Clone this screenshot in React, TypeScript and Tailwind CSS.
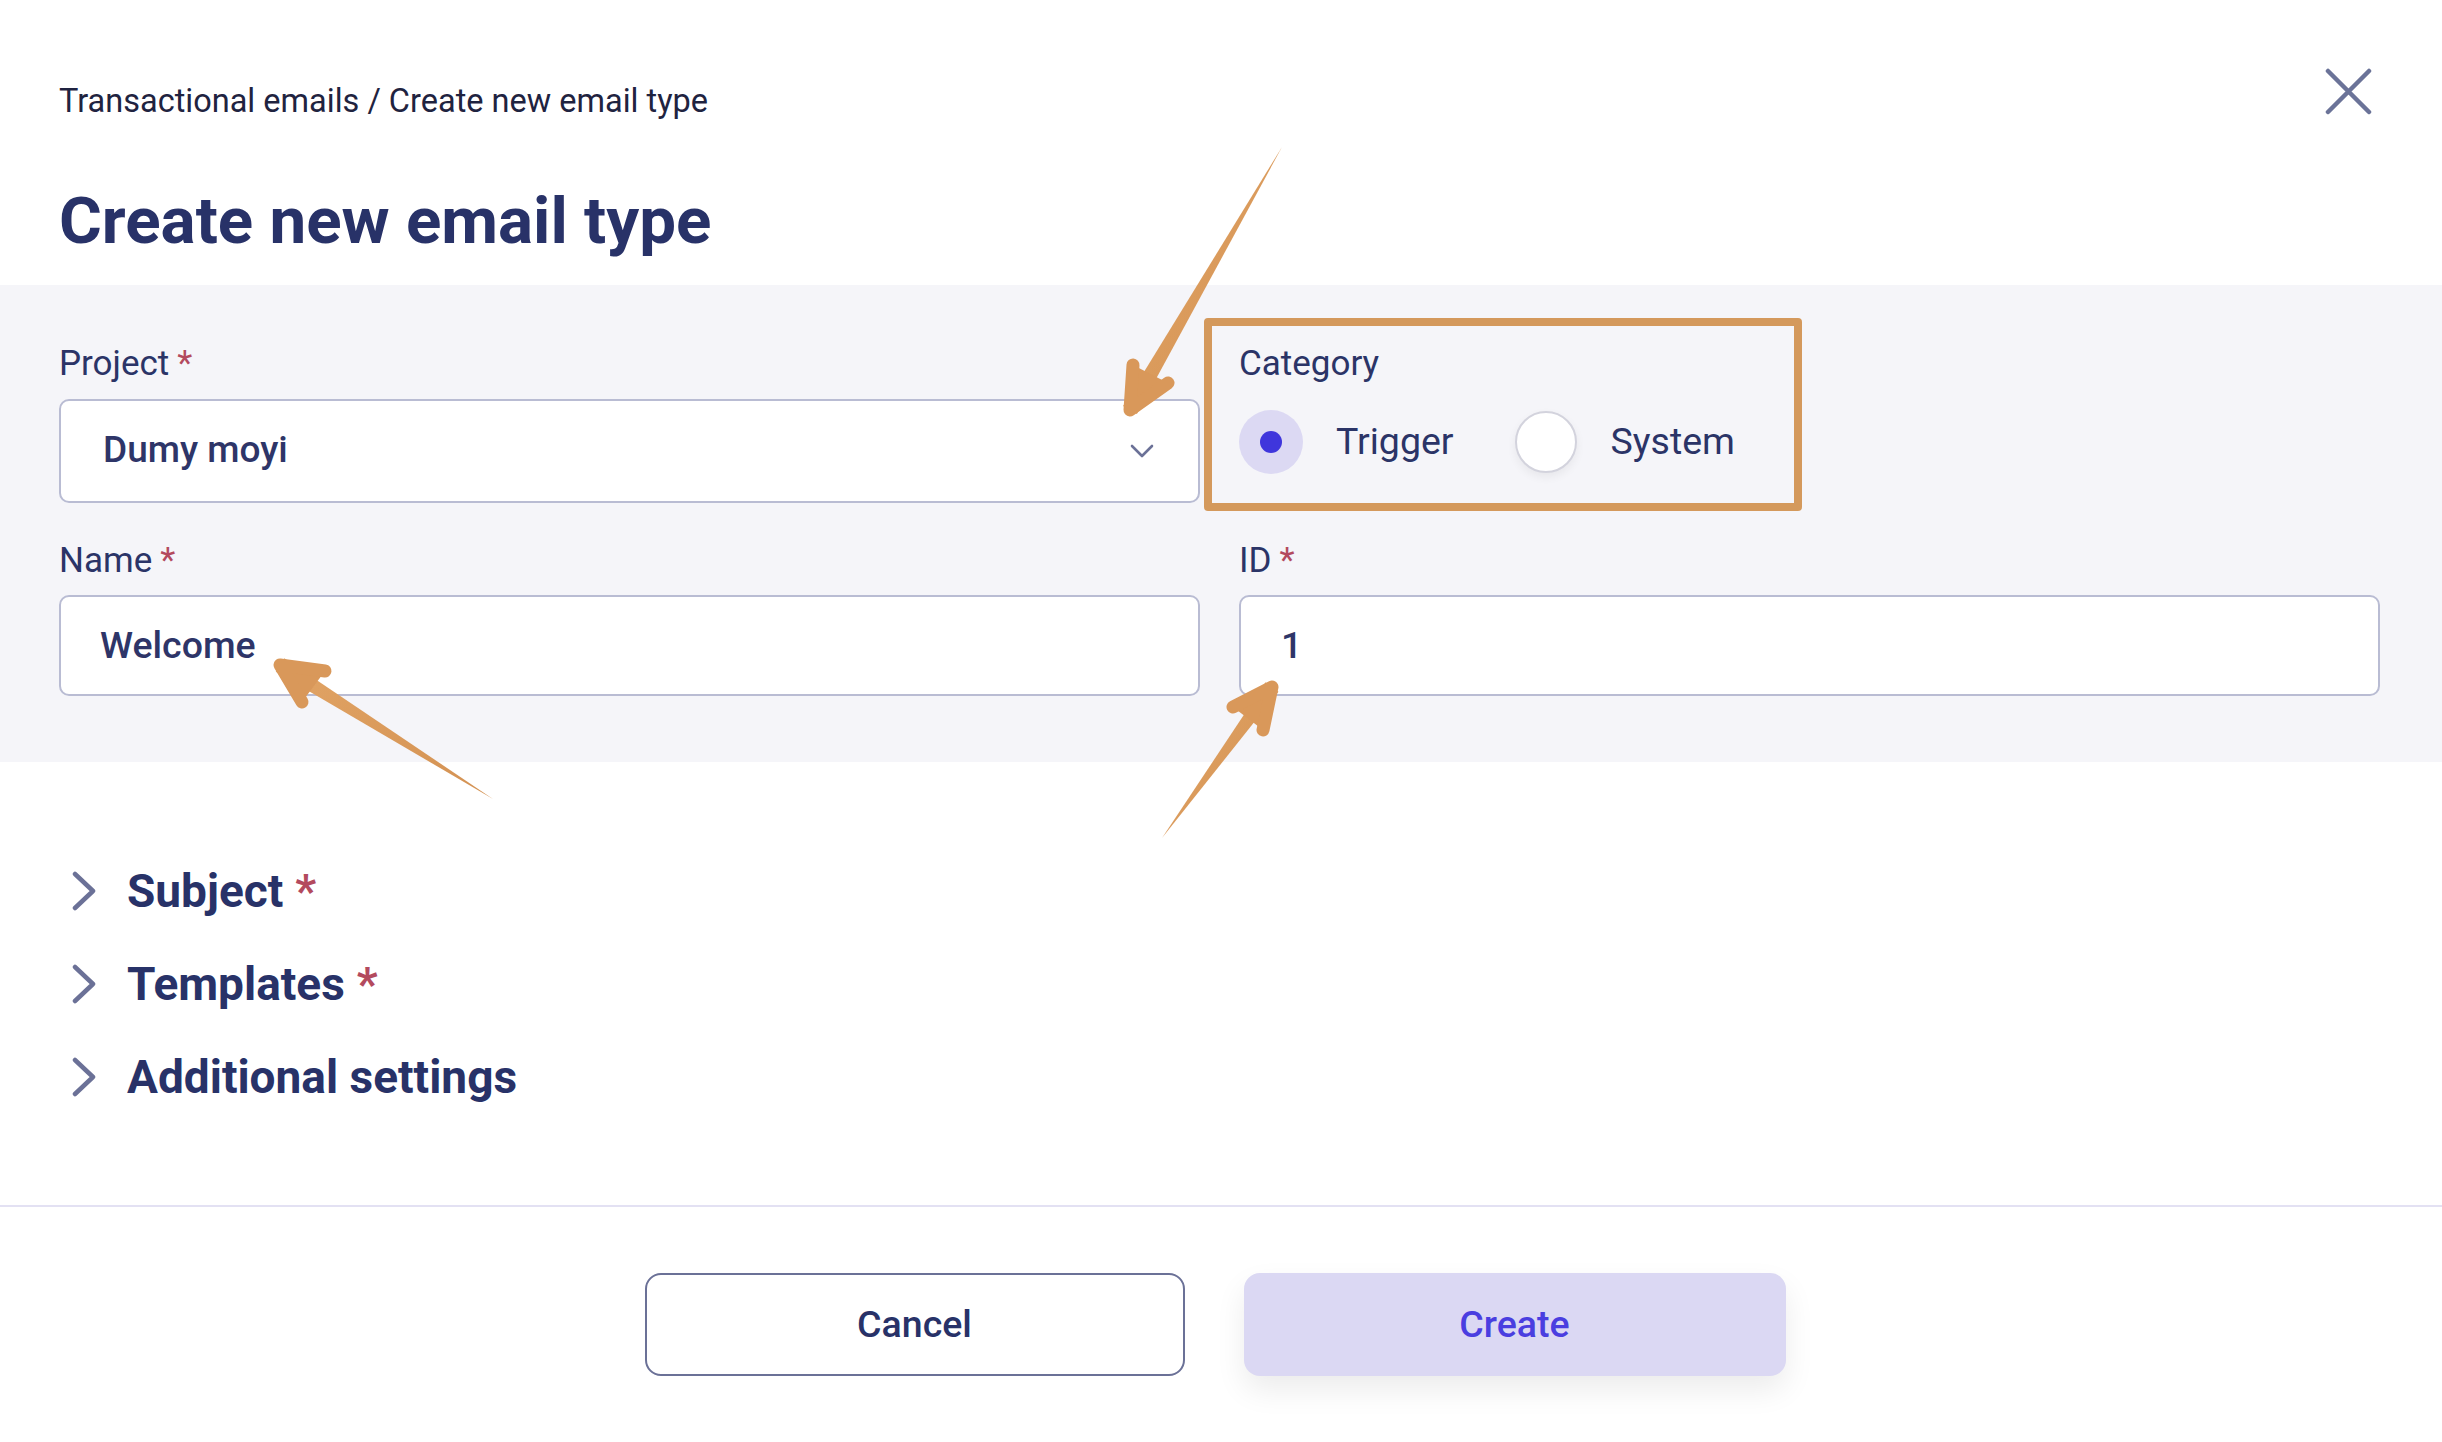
import React from "react";

type Pt = [number, number];

function Arrow({ tail, tip, barbs }: { tail: Pt; tip: Pt; barbs: [Pt, Pt] }) {
    const dx = tip[0] - tail[0];
    const dy = tip[1] - tail[1];
    const len = Math.hypot(dx, dy);
    const px = (-dy / len) * 8;
    const py = (dx / len) * 8;
    const shaft = `${tail[0]},${tail[1]} ${tip[0] + px},${tip[1] + py} ${tip[0] - px},${tip[1] - py}`;
    return (
        <g>
            <polygon points={shaft} fill="url(#arrowGrad)" />
            <polygon points={`${barbs[0][0]},${barbs[0][1]} ${tip[0]},${tip[1]} ${barbs[1][0]},${barbs[1][1]}`} fill="#d9985a" />
            <polyline
                points={`${barbs[0][0]},${barbs[0][1]} ${tip[0]},${tip[1]} ${barbs[1][0]},${barbs[1][1]}`}
                fill="none"
                stroke="#d9985a"
                strokeWidth={13}
                strokeLinecap="round"
                strokeLinejoin="round"
            />
        </g>
    );
}

function Label({ text, required }: { text: string; required?: boolean }) {
    return (
        <div className="text-[35px] leading-[42px] text-[#2b3467]">
            {text}
            {required && <span className="ml-[8px] text-[#b34a5e]">*</span>}
        </div>
    );
}

function Chevron() {
    return (
        <svg width="40" height="40" viewBox="0 0 40 40" className="shrink-0">
            <path d="M16 3 L34 20 L16 37" fill="none" stroke="#6b7197" strokeWidth="4.5" strokeLinecap="round" strokeLinejoin="round" />
        </svg>
    );
}

function Section({ title, required }: { title: string; required?: boolean }) {
    return (
        <div className="flex items-center gap-[28px] h-[56px]">
            <Chevron />
            <span className="text-[46px] font-bold text-[#283268] leading-[56px]">
                {title}
                {required && <span className="ml-[12px] text-[#b34a5e]">*</span>}
            </span>
        </div>
    );
}

export default function App() {
    return (
        <div className="relative w-full min-h-[1442px] bg-white overflow-hidden font-['Roboto',sans-serif]">
            {/* header */}
            <div className="flex justify-between items-start pl-[59px] pr-[70px] pt-[81px]">
                <div className="text-[32.5px] leading-[40px] text-[#1f2340]">Transactional emails / Create new email type</div>
                <button className="-mt-[13px] w-[47px] h-[47px]">
                    <svg width="47" height="47" viewBox="0 0 47 47">
                        <path d="M3 3 L44 44 M44 3 L3 44" stroke="#6b7398" strokeWidth="4.5" strokeLinecap="round" />
                    </svg>
                </button>
            </div>
            <h1 className="px-[59px] mt-[62px] text-[65.5px] leading-[76px] font-bold text-[#283268]">Create new email type</h1>

            {/* fields */}
            <div className="mt-[26px] bg-[#f5f5f9] pl-[59px] pr-[62px] pt-[58px] pb-[66px] grid grid-cols-2 gap-x-[39px]">
                <div className="flex flex-col gap-[14px]">
                    <Label text="Project" required />
                    <div className="h-[104px] bg-white border-2 border-[#b9bcd3] rounded-[10px] flex items-center justify-between pl-[42px] pr-[44px]">
                        <span className="text-[37px] font-medium text-[#2e3568] -mt-[2px]">Dumy moyi</span>
                        <svg width="24" height="14" viewBox="0 0 24 14">
                            <path d="M2 2 L12 12 L22 2" fill="none" stroke="#6b7197" strokeWidth="2.6" strokeLinecap="round" strokeLinejoin="round" />
                        </svg>
                    </div>
                </div>
                <div className="flex flex-col gap-[14px]">
                    <Label text="Category" />
                    <div className="h-[104px] flex items-center">
                        <div className="w-[64px] h-[64px] rounded-full bg-[#dcd9f3] flex items-center justify-center -mt-[18px]">
                            <div className="w-[22px] h-[22px] rounded-full bg-[#3f36dc]" />
                        </div>
                        <span className="ml-[33px] text-[37.5px] text-[#2b3467] -mt-[20px]">Trigger</span>
                        <div className="ml-[61px] w-[62px] h-[62px] rounded-full bg-white border-2 border-[#d3d3dd] shadow-[0_4px_10px_rgba(0,0,0,0.06)] -mt-[18px]" />
                        <span className="ml-[34px] text-[37.5px] text-[#2b3467] -mt-[20px]">System</span>
                    </div>
                </div>
                <div className="flex flex-col gap-[13px] mt-[37px]">
                    <Label text="Name" required />
                    <div className="h-[101px] bg-white border-2 border-[#b9bcd3] rounded-[10px] flex items-center pl-[39px]">
                        <span className="text-[37.5px] font-medium text-[#2e3568]">Welcome</span>
                    </div>
                </div>
                <div className="flex flex-col gap-[13px] mt-[37px]">
                    <Label text="ID" required />
                    <div className="h-[101px] bg-white border-2 border-[#b9bcd3] rounded-[10px] flex items-center pl-[40px]">
                        <span className="text-[37.5px] font-medium text-[#2e3568]">1</span>
                    </div>
                </div>
            </div>

            {/* sections */}
            <div className="pl-[59px] pt-[101px] pb-[100px] flex flex-col gap-[37px]">
                <Section title="Subject" required />
                <Section title="Templates" required />
                <Section title="Additional settings" />
            </div>

            {/* footer */}
            <div className="border-t-2 border-[#e3e1f3] pt-[66px] pb-[60px] pr-[12px] flex justify-center gap-[59px]">
                <button className="w-[540px] h-[103px] rounded-[16px] border-2 border-[#6b7197] bg-white text-[37.5px] font-medium text-[#283268]">
                    Cancel
                </button>
                <button className="w-[542px] h-[103px] rounded-[16px] bg-[#dbd8f3] text-[37.5px] font-medium text-[#4a3ee0] shadow-[0_14px_30px_rgba(0,0,0,0.08)]">
                    Create
                </button>
            </div>

            {/* annotation box */}
            <div className="absolute left-[1204px] top-[318px] w-[598px] h-[193px] border-[8px] border-[#d4995c] rounded-[4px] pointer-events-none" />

            {/* annotation arrows */}
            <svg className="absolute left-0 top-0 pointer-events-none" width="2442" height="1442" viewBox="0 0 2442 1442">
                <defs>
                    <linearGradient id="arrowGrad" x1="0" y1="0" x2="1" y2="1">
                        <stop offset="0" stopColor="#e2a566" />
                        <stop offset="1" stopColor="#d39152" />
                    </linearGradient>
                </defs>
                <Arrow tail={[1282, 147]} tip={[1130, 410]} barbs={[[1133, 365], [1168, 383]]} />
                <Arrow tail={[493, 799]} tip={[280, 665]} barbs={[[325, 671], [302, 702]]} />
                <Arrow tail={[1162, 838]} tip={[1272, 687]} barbs={[[1233, 707], [1263, 730]]} />
            </svg>
        </div>
    );
}
